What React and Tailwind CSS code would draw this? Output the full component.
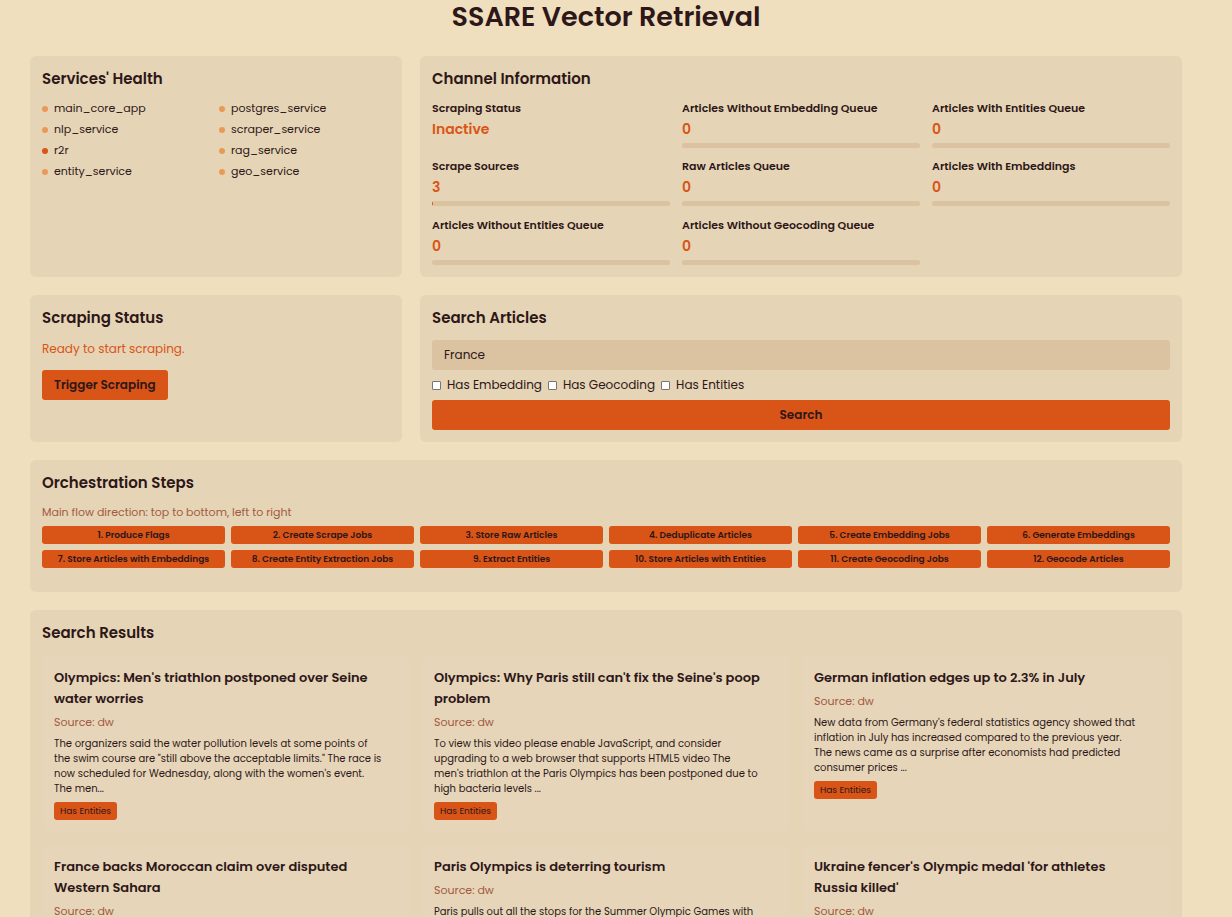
import React, { useState } from "react";

const services = [
  { name: "main_core_app", ok: true },
  { name: "postgres_service", ok: true },
  { name: "nlp_service", ok: true },
  { name: "scraper_service", ok: true },
  { name: "r2r", ok: false },
  { name: "rag_service", ok: true },
  { name: "entity_service", ok: true },
  { name: "geo_service", ok: true },
];

const channels = [
  { label: "Scraping Status", value: "Inactive" },
  { label: "Articles Without Embedding Queue", value: "0", fill: 0 },
  { label: "Articles With Entities Queue", value: "0", fill: 0 },
  { label: "Scrape Sources", value: "3", fill: 0.3 },
  { label: "Raw Articles Queue", value: "0", fill: 0 },
  { label: "Articles With Embeddings", value: "0", fill: 0 },
  { label: "Articles Without Entities Queue", value: "0", fill: 0 },
  { label: "Articles Without Geocoding Queue", value: "0", fill: 0 },
];

const steps = [
  "Produce Flags",
  "Create Scrape Jobs",
  "Store Raw Articles",
  "Deduplicate Articles",
  "Create Embedding Jobs",
  "Generate Embeddings",
  "Store Articles with Embeddings",
  "Create Entity Extraction Jobs",
  "Extract Entities",
  "Store Articles with Entities",
  "Create Geocoding Jobs",
  "Geocode Articles",
];

const articles = [
  {
    title: "Olympics: Men's triathlon postponed over Seine water worries",
    text: 'The organizers said the water pollution levels at some points of the swim course are "still above the acceptable limits." The race is now scheduled for Wednesday, along with the women\'s event. The men...',
    entities: true,
  },
  {
    title: "Olympics: Why Paris still can't fix the Seine's poop problem",
    text: "To view this video please enable JavaScript, and consider upgrading to a web browser that supports HTML5 video The men's triathlon at the Paris Olympics has been postponed due to high bacteria levels ...",
    entities: true,
  },
  {
    title: "German inflation edges up to 2.3% in July",
    text: "New data from Germany's federal statistics agency showed that inflation in July has increased compared to the previous year. The news came as a surprise after economists had predicted consumer prices ...",
    entities: true,
  },
  { title: "France backs Moroccan claim over disputed Western Sahara" },
  {
    title: "Paris Olympics is deterring tourism",
    text: "Paris pulls out all the stops for the Summer Olympic Games with",
  },
  { title: "Ukraine fencer's Olympic medal 'for athletes Russia killed'" },
];

function Card({ title, className = "", children }) {
  return (
    <section className={`flex flex-col rounded-md bg-[#e5d4b5] p-3 ${className}`}>
      <h2 className="mb-3 text-[15px] leading-[21px] font-semibold">{title}</h2>
      {children}
    </section>
  );
}

function Channel({ label, value, fill }) {
  return (
    <div>
      <h3 className="text-[11px] leading-[15px] font-semibold">{label}</h3>
      <p className="my-[3px] text-[14px] leading-[21px] font-semibold text-[#d95417]">{value}</p>
      {fill !== undefined && (
        <div className="h-[5px] overflow-hidden rounded-full bg-[#dbc2a0]">
          <div className="h-full bg-[#d95417]" style={{ width: `${fill}%` }} />
        </div>
      )}
    </div>
  );
}

function Filter({ label }) {
  return (
    <label className="flex items-center gap-[6px]">
      <input
        type="checkbox"
        className="size-[9px] appearance-none rounded-[1px] border border-[#767676] bg-white checked:bg-[#d95417]"
      />
      {label}
    </label>
  );
}

function Article({ title, text, entities }) {
  return (
    <article className="rounded-md bg-[#e6d5b9] p-3">
      <h3 className="pr-3 text-[13px] leading-[21px] font-semibold">{title}</h3>
      <p className="my-[6px] text-[11px] leading-[15px] text-[#a35a42]">Source: dw</p>
      {text && <p className="pr-4 text-[10px] leading-[15px]">{text}</p>}
      {entities && (
        <span className="mt-[6px] block w-fit rounded-[3px] bg-[#d95417] px-[6px] text-[9px] leading-[18px]">
          Has Entities
        </span>
      )}
    </article>
  );
}

export default function App() {
  const [query, setQuery] = useState("France");

  return (
    <div className="min-h-screen bg-[#f0dfbe] pr-5 font-['Poppins','Inter',sans-serif] text-[12px] text-[#2d1718]">
      <main className="px-[30px] pb-6">
        <h1 className="mb-[22px] text-center text-[27px] leading-[34px] font-semibold">SSARE Vector Retrieval</h1>

        <div className="grid grid-cols-3 gap-[18px]">
          <Card title="Services' Health" className="min-h-[221px]">
            <ul className="grid grid-cols-2 gap-[6px] text-[11px] leading-[15px]">
              {services.map((s) => (
                <li key={s.name} className="flex items-center gap-[6px]">
                  <span className={`size-[6px] rounded-full ${s.ok ? "bg-[#ea9a58]" : "bg-[#d95417]"}`} />
                  {s.name}
                </li>
              ))}
            </ul>
          </Card>

          <Card title="Channel Information" className="col-span-2">
            <div className="grid flex-1 grid-cols-3 gap-x-3 gap-y-[11px]">
              {channels.map((c) => (
                <Channel key={c.label} {...c} />
              ))}
            </div>
          </Card>

          <Card title="Scraping Status">
            <p className="mb-3 leading-[18px] text-[#d95417]">Ready to start scraping.</p>
            <button
              type="button"
              className="w-fit rounded-[3px] bg-[#d95417] px-3 leading-[30px] font-semibold"
            >
              Trigger Scraping
            </button>
          </Card>

          <Card title="Search Articles" className="col-span-2">
            <form className="flex flex-col gap-[6px]" onSubmit={(e) => e.preventDefault()}>
              <input
                type="text"
                aria-label="Search query"
                value={query}
                onChange={(e) => setQuery(e.target.value)}
                className="h-[30px] w-full rounded-[3px] bg-[#dbc2a0] px-3 outline-none"
              />
              <div className="flex gap-[6px] leading-[18px]">
                <Filter label="Has Embedding" />
                <Filter label="Has Geocoding" />
                <Filter label="Has Entities" />
              </div>
              <button type="submit" className="rounded-[3px] bg-[#d95417] leading-[30px] font-semibold">
                Search
              </button>
            </form>
          </Card>

          <Card title="Orchestration Steps" className="col-span-3">
            <p className="mb-[6px] text-[11px] leading-[15px] text-[#a35a42]">
              Main flow direction: top to bottom, left to right
            </p>
            <div className="mb-3 grid grid-cols-6 gap-[6px]">
              {steps.map((step, i) => (
                <button
                  key={step}
                  type="button"
                  className="rounded-[3px] bg-[#d95417] text-[9px] leading-[18px] font-semibold"
                >
                  {i + 1}. {step}
                </button>
              ))}
            </div>
          </Card>

          <Card title="Search Results" className="col-span-3">
            <div className="grid grid-cols-3 gap-3">
              {articles.map((a) => (
                <Article key={a.title} {...a} />
              ))}
            </div>
          </Card>
        </div>
      </main>
    </div>
  );
}
